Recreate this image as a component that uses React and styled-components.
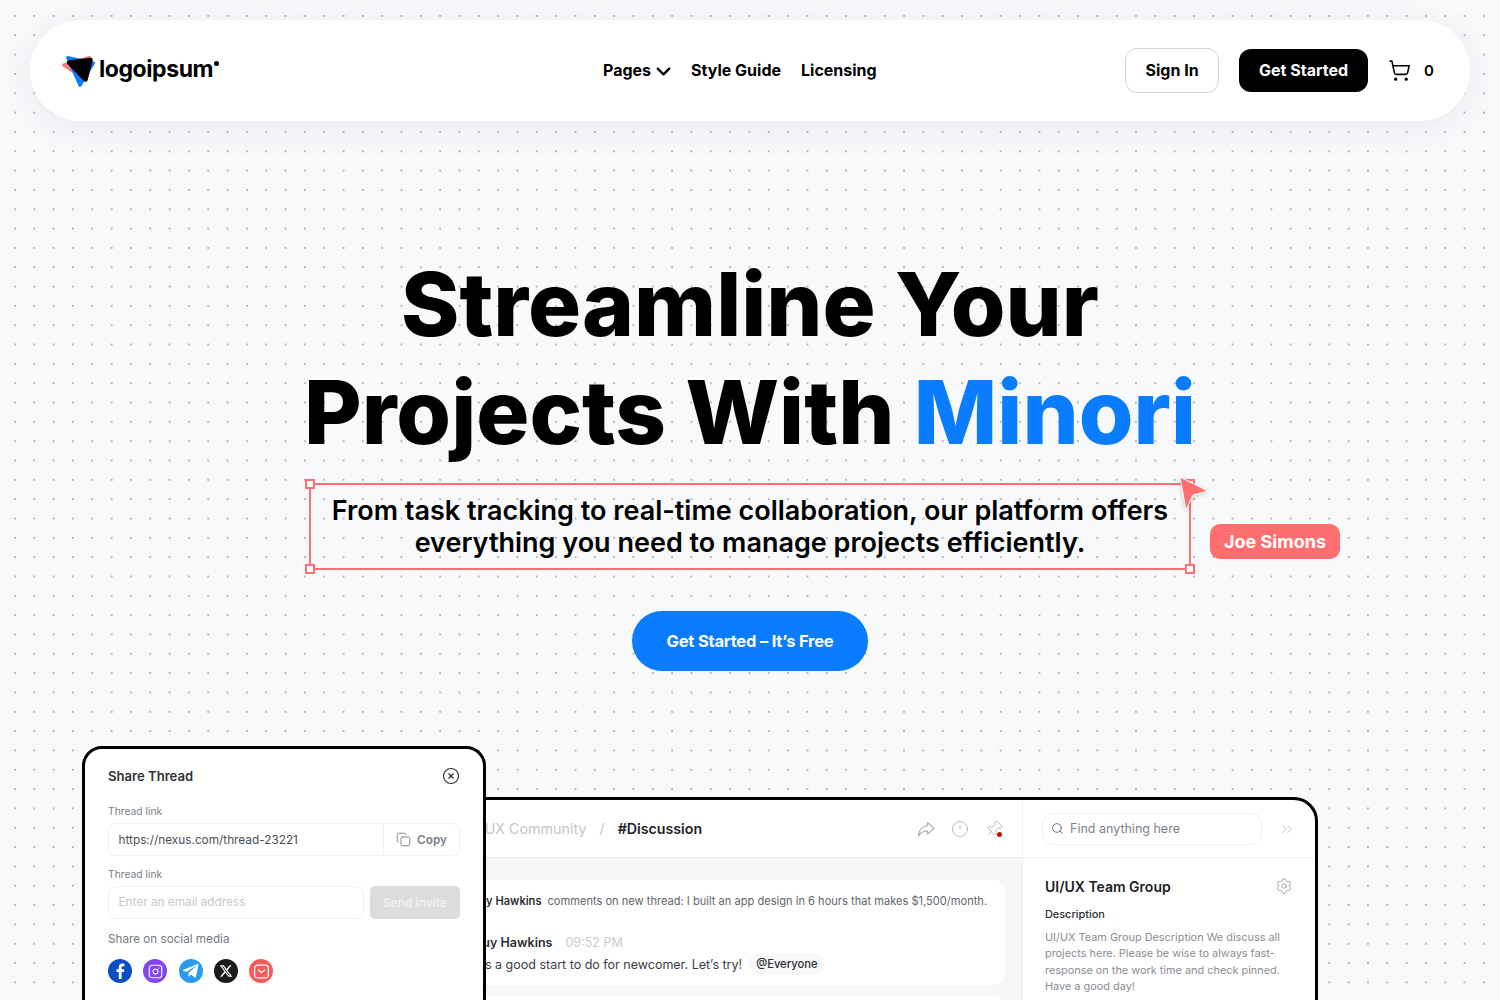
import React from "react";
import styled, { createGlobalStyle } from "styled-components";
import { ChevronDown, ShoppingCart, CircleX, Copy, CircleAlert, Pin, Search, ChevronsRight, Settings, Instagram } from "lucide-react";

const Global = createGlobalStyle`
  html, body { margin: 0; padding: 0; height: 1000px; overflow: hidden; }
  body { font-family: Inter, "Liberation Sans", sans-serif; background: #f8f9fb; color: #000; }
  * { box-sizing: border-box; }
`;

const Page = styled.div`
  height: 1000px;
  overflow: hidden;
  padding: 20px 30px 0;
  background-color: #f8f9fb;
  background-image: radial-gradient(circle at center, #b4b7bd 0, #b4b7bd 1px, transparent 1.4px);
  background-size: 19.33px 19.33px;
  background-position: 5.3px 6.3px;
`;
const Nav = styled.header`
  height: 101px;
  background: #fff;
  border-radius: 50px;
  box-shadow: 0 6px 36px rgba(30, 40, 60, 0.07);
  padding: 0 36px 0 32px;
  display: flex;
  align-items: center;
`;
const Logo = styled.div`
  display: flex;
  align-items: center;
  gap: 1px;
  width: 157px;
  font-size: 23px;
  font-weight: 700;
  letter-spacing: -0.42px;
`;
const LogoDot = styled.span`
  width: 5px;
  height: 5px;
  border-radius: 50%;
  background: #000;
  align-self: flex-start;
  margin: 7px 0 0 1px;
`;
const LogoWord = styled.div`
  display: flex;
  margin-top: -3px;
  line-height: 30px;
`;
const LogoSvg = styled.svg`
  margin-left: -2px;
  flex: none;
`;
const Links = styled.nav`
  display: flex;
  gap: 20px;
  margin-left: 384px;
  margin-top: -2px;
  font-size: 16px;
  font-weight: 700;
`;
const LinkItem = styled.span`
  display: flex;
  align-items: center;
`;
const Chevron = styled(ChevronDown)`
  margin: 3px -4px 0 1px;
`;
const Actions = styled.div`
  margin-left: auto;
  display: flex;
  align-items: center;
`;
const SignIn = styled.button`
  width: 94px;
  height: 45px;
  padding: 0 0 2px;
  border-radius: 12px;
  border: 1px solid #cdd5df;
  background: #fff;
  font: 700 16px Inter, sans-serif;
  color: #000;
`;
const GetStarted = styled.button`
  width: 129px;
  height: 43px;
  padding: 0 0 2px;
  margin-left: 20px;
  border: 0;
  border-radius: 12px;
  background: #000;
  color: #fff;
  font: 700 16px Inter, sans-serif;
`;
const Cart = styled.div`
  display: flex;
  align-items: center;
  margin-left: 20px;
  gap: 13px;
  font-size: 15px;
  font-weight: 600;
`;
const Hero = styled.section`
  display: flex;
  flex-direction: column;
  align-items: center;
  padding-top: 129px;
`;
const Title = styled.h1`
  margin: 0;
  font-size: 88.5px;
  line-height: 108px;
  font-weight: 800;
  text-align: center;
  letter-spacing: 0;
`;
const Accent = styled.span`
  color: #0a7cff;
`;
const Selection = styled.div`
  position: relative;
  width: 882px;
  height: 87px;
  margin-top: 17px;
  border: 2px solid #ff6f6f;
  display: flex;
  align-items: center;
  justify-content: center;
  text-align: center;
  font-size: 27px;
  line-height: 32px;
  font-weight: 600;
`;
const Handle = styled.i`
  position: absolute;
  width: 10px;
  height: 10px;
  background: #fff;
  border: 2px solid #ff6f6f;
  ${(p) => (p.$top ? "top: -6px;" : "bottom: -6px;")}
  ${(p) => (p.$left ? "left: -6px;" : "right: -6px;")}
`;
const Pointer = styled.svg`
  position: absolute;
  right: -20px;
  top: -10px;
  filter: drop-shadow(0 1px 2px rgba(0, 0, 0, 0.2));
`;
const NameTag = styled.div`
  position: absolute;
  left: 899px;
  top: 39px;
  width: 130px;
  height: 35px;
  border-radius: 10px;
  background: #ff6f6f;
  color: #fff;
  font-size: 18px;
  line-height: 35px;
  font-weight: 700;
`;
const Cta = styled.button`
  margin-top: 41px;
  width: 236px;
  height: 60px;
  border: 0;
  border-radius: 30px;
  background: #0a7cff;
  color: #fff;
  font: 700 16.5px Inter, sans-serif;
  letter-spacing: -0.2px;
`;
const Stage = styled.section`
  position: relative;
  height: 400px;
  margin-top: 75px;
`;
const ShareCard = styled.div`
  position: absolute;
  z-index: 2;
  left: 52px;
  top: 0;
  width: 404px;
  height: 300px;
  padding: 18px 23px;
  background: #fff;
  border: 3px solid #000;
  border-radius: 20px;
`;
const ShareHead = styled.div`
  display: flex;
  justify-content: space-between;
  align-items: center;
  height: 18px;
  font-size: 13.1px;
  font-weight: 600;
  color: #2f3339;
`;
const FieldLabel = styled.div`
  font-size: 10.3px;
  line-height: 14px;
  color: #7a7f87;
  margin: ${(p) => p.$mt}px 0 5px;
`;
const FieldRow = styled.div`
  display: flex;
  gap: 6px;
`;
const UrlBox = styled.div`
  display: flex;
  align-items: center;
  flex: 1;
  height: 33px;
  border: 1px solid #eef0f3;
  border-radius: 8px;
  font-size: 11.8px;
  color: #4a4f57;
`;
const UrlText = styled.span`
  flex: 1;
  padding-left: 9.5px;
`;
const CopyBtn = styled.span`
  display: flex;
  align-items: center;
  justify-content: center;
  gap: 6px;
  width: 76px;
  height: 100%;
  border-left: 1px solid #eef0f3;
  color: #7b818c;
  font-size: 11.8px;
  font-weight: 600;
`;
const EmailBox = styled.div`
  flex: 1;
  height: 33px;
  padding-left: 9.5px;
  border: 1px solid #eef0f3;
  border-radius: 8px;
  font-size: 11.8px;
  line-height: 31px;
  color: #c6c9ce;
`;
const SendBtn = styled.div`
  width: 90px;
  height: 33px;
  border-radius: 5px;
  background: #dcdcdc;
  color: #f1f1f1;
  font-size: 12px;
  font-weight: 600;
  line-height: 33px;
  text-align: center;
`;
const SocialLabel = styled.div`
  margin-top: 12px;
  font-size: 11.7px;
  line-height: 16px;
  color: #74797f;
`;
const Socials = styled.div`
  display: flex;
  gap: 11.3px;
  margin-top: 12px;
`;
const Social = styled.span`
  width: 24px;
  height: 24px;
  border-radius: 50%;
  background: ${(p) => p.$bg};
  color: #fff;
  display: flex;
  align-items: center;
  justify-content: center;
`;
const AppCard = styled.div`
  position: absolute;
  left: 152px;
  right: 152px;
  top: 51px;
  height: 400px;
  background: #fff;
  border: 3px solid #000;
  border-radius: 24px;
  overflow: hidden;
  display: grid;
  grid-template-columns: 240px 598px 1fr;
`;
const Sidebar = styled.div`
  border-right: 1px solid #eef0f2;
`;
const Main = styled.div`
  display: flex;
  flex-direction: column;
  border-right: 1px solid #eef0f2;
`;
const MainHead = styled.div`
  height: 58px;
  flex: none;
  display: flex;
  align-items: center;
  padding: 0 19px 0 40px;
  border-bottom: 1px solid #eef0f2;
`;
const Crumb = styled.span`
  font-size: 14.3px;
  color: #c3c6cb;
`;
const Slash = styled.span`
  font-size: 14.3px;
  color: #c3c6cb;
  margin: 0 13px;
`;
const Channel = styled.span`
  font-size: 14.2px;
  font-weight: 600;
  color: #1e2126;
`;
const HeadIcons = styled.div`
  margin-left: auto;
  display: flex;
  gap: 16px;
  color: #aeb2b8;
`;
const PinWrap = styled.span`
  position: relative;
  display: flex;
`;
const RedDot = styled.i`
  position: absolute;
  right: 1px;
  bottom: 1px;
  width: 5px;
  height: 5px;
  border-radius: 50%;
  background: #c00b0b;
`;
const Feed = styled.div`
  flex: 1;
  background: #f6f7f9;
  padding: 22px 17px;
`;
const Message = styled.div`
  height: 105px;
  margin-bottom: 11px;
  padding: 13px 0 0 29px;
  background: #fff;
  border-radius: 11px;
`;
const Notice = styled.div`
  font-size: 11.1px;
  line-height: 16px;
  color: #62666c;
  white-space: nowrap;
`;
const Strong = styled.b`
  font-weight: 600;
  color: #2b2e33;
  margin-right: 6px;
`;
const Who = styled.div`
  display: flex;
  align-items: baseline;
  gap: 13px;
  margin: 25px 0 0 2px;
  font-size: 12.5px;
  line-height: 17px;
  font-weight: 600;
  color: #2b2e33;
`;
const Time = styled.span`
  font-weight: 400;
  color: #c9ccd0;
`;
const Body = styled.div`
  display: flex;
  align-items: center;
  gap: 7px;
  margin: 2px 0 0 4px;
  font-size: 12.5px;
  color: #3a3e44;
`;
const Mention = styled.span`
  padding: 0 7px;
  height: 22px;
  line-height: 22px;
  border-radius: 11px;
  background: #f6f7f9;
  font-size: 11.2px;
  font-weight: 500;
  color: #2b2e33;
`;
const Side = styled.div`
  display: flex;
  flex-direction: column;
`;
const SearchRow = styled.div`
  height: 58px;
  flex: none;
  display: flex;
  align-items: center;
  padding: 0 19px 0 19px;
  border-bottom: 1px solid #eef0f2;
  color: #b5b8bd;
`;
const SearchBox = styled.div`
  flex: 1;
  height: 32px;
  margin-right: 16px;
  display: flex;
  align-items: center;
  gap: 6px;
  padding-left: 8px;
  border: 1px solid #eef0f3;
  border-radius: 10px;
  font-size: 12.5px;
  color: #7d828a;
`;
const SideBody = styled.div`
  padding: 19px 22px 0 22px;
`;
const GroupHead = styled.div`
  display: flex;
  justify-content: space-between;
  align-items: center;
  font-size: 14px;
  line-height: 17px;
  font-weight: 600;
  color: #1e2126;
`;
const Desc = styled.div`
  margin-top: 12px;
  font-size: 10.9px;
  line-height: 14px;
  font-weight: 500;
  color: #2b2e33;
`;
const DescText = styled.p`
  margin: 8px 0 0;
  font-size: 10.9px;
  line-height: 16.3px;
  color: #8a8e95;
`;

const LogoMark = () => (
  <LogoSvg width="38" height="36" viewBox="0 0 38 36">
    <polygon points="3.500,12 29.500,4.500 26,27" fill="#ff7a7a" stroke="#ff7a7a" strokeWidth="3" strokeLinejoin="round" />
    <polygon points="7.500,4.500 33.500,10 20,32.500" fill="#0a7cff" stroke="#0a7cff" strokeWidth="3" strokeLinejoin="round" />
    <polygon points="9,9.500 30.500,7 25.500,26.500" fill="#000" stroke="#000" strokeWidth="4.500" strokeLinejoin="round" />
  </LogoSvg>
);

export default function App() {
  return (
    <Page>
      <Global />
      <Nav>
        <Logo>
          <LogoMark />
          <LogoWord>logoipsum<LogoDot /></LogoWord>
        </Logo>
        <Links>
          <LinkItem>Pages<Chevron size={23} strokeWidth={2.4} /></LinkItem>
          <LinkItem>Style Guide</LinkItem>
          <LinkItem>Licensing</LinkItem>
        </Links>
        <Actions>
          <SignIn>Sign In</SignIn>
          <GetStarted>Get Started</GetStarted>
          <Cart><ShoppingCart size={23} strokeWidth={1.6} />0</Cart>
        </Actions>
      </Nav>
      <Hero>
        <Title>Streamline Your<br />Projects With <Accent>Minori</Accent></Title>
        <Selection>
          <div>From task tracking to real-time collaboration, our platform offers<br />everything you need to manage projects efficiently.</div>
          <Handle $top $left /><Handle $left /><Handle $top /><Handle />
          <Pointer width="36" height="38" viewBox="0 0 36 38">
            <polygon points="7,2 35,16 20,20 13,35" fill="#ff6f6f" stroke="#fff" strokeWidth="1" />
          </Pointer>
          <NameTag>Joe Simons</NameTag>
        </Selection>
        <Cta>Get Started – It’s Free</Cta>
      </Hero>
      <Stage>
        <ShareCard>
          <ShareHead>Share Thread <CircleX size={18} strokeWidth={1.5} color="#333" /></ShareHead>
          <FieldLabel $mt={19}>Thread link</FieldLabel>
          <FieldRow>
            <UrlBox>
              <UrlText>https://nexus.com/thread-23221</UrlText>
              <CopyBtn><Copy size={15} strokeWidth={1.5} />Copy</CopyBtn>
            </UrlBox>
          </FieldRow>
          <FieldLabel $mt={11}>Thread link</FieldLabel>
          <FieldRow>
            <EmailBox>Enter an email address</EmailBox>
            <SendBtn>Send invite</SendBtn>
          </FieldRow>
          <SocialLabel>Share on social media</SocialLabel>
          <Socials>
            <Social $bg="#0b4fc4">
              <svg width="14" height="16" viewBox="0 0 14 16"><path fill="#fff" d="M8.600 16V9h2.300l.4-2.800H8.600V4.600c0-.8.3-1.300 1.400-1.300h1.400V.8C11.100.7 10.300.6 9.400.6 7.300.6 5.800 1.900 5.800 4.200v2H3.500V9h2.300v7z" /></svg>
            </Social>
            <Social $bg="#8246f0"><Instagram size={15} strokeWidth={1.8} /></Social>
            <Social $bg="#2b9bef">
              <svg width="16" height="14" viewBox="0 0 16 14"><path fill="#fff" d="M15.500.6 12.900 13c-.1.600-.6.700-1.100.4L7.900 10.500 6.100 12.300c-.2.200-.4.300-.7.300l.3-3.800 7-6.300c.3-.3-.1-.4-.5-.2L3.600 7.700.3 6.700c-.7-.2-.7-.7.2-1L14.600.1c.6-.2 1.100.1.900.5z" /></svg>
            </Social>
            <Social $bg="#1c1c1c">
              <svg width="14" height="14" viewBox="0 0 24 24"><path fill="#fff" d="M18.240 2.250h3.310l-7.230 8.260 8.500 11.240H16.170l-5.210-6.820L4.990 21.750H1.680l7.730-8.840L1.250 2.250H8.080l4.710 6.230zm-1.160 17.520h1.830L7.080 4.130H5.120z" /></svg>
            </Social>
            <Social $bg="#f75a5a">
              <svg width="17" height="17" viewBox="0 0 16 16" fill="none" stroke="#fff" strokeWidth="1.200"><rect x="1.500" y="2" width="13" height="12" rx="3" /><path d="M5 6.500 8 9l3-2.500" strokeLinecap="round" /></svg>
            </Social>
          </Socials>
        </ShareCard>
        <AppCard>
          <Sidebar />
          <Main>
            <MainHead>
              <Crumb>UI/UX Community</Crumb>
              <Slash>/</Slash>
              <Channel>#Discussion</Channel>
              <HeadIcons>
                <svg width="18" height="18" viewBox="0 0 18 18" fill="none" stroke="currentColor" strokeWidth="1.200" strokeLinejoin="round"><path d="M10.500 2.500 17 8.500l-6.500 5.500v-3.200C6.500 10.800 3.500 12.500 1.500 16c0-6 3.500-9.800 9-10.200z" /></svg>
                <CircleAlert size={18} strokeWidth={1.2} />
                <PinWrap>
                  <Pin size={18} strokeWidth={1.2} style={{ transform: "rotate(45deg)" }} />
                  <RedDot />
                </PinWrap>
              </HeadIcons>
            </MainHead>
            <Feed>
              <Message>
                <Notice><Strong>Guy Hawkins</Strong>comments on new thread: I built an app design in 6 hours that makes $1,500/month.</Notice>
                <Who>Guy Hawkins <Time>09:52 PM</Time></Who>
                <Body>It’s a good start to do for newcomer. Let’s try! <Mention>@Everyone</Mention></Body>
              </Message>
              <Message />
            </Feed>
          </Main>
          <Side>
            <SearchRow>
              <SearchBox><Search size={13} strokeWidth={1.5} color="#555" />Find anything here</SearchBox>
              <ChevronsRight size={18} strokeWidth={1.1} />
            </SearchRow>
            <SideBody>
              <GroupHead>UI/UX Team Group <Settings size={18} strokeWidth={1} color="#888" /></GroupHead>
              <Desc>Description</Desc>
              <DescText>UI/UX Team Group Description We discuss all projects here. Please be wise to always fast-response on the work time and check pinned. Have a good day!</DescText>
            </SideBody>
          </Side>
        </AppCard>
      </Stage>
    </Page>
  );
}
